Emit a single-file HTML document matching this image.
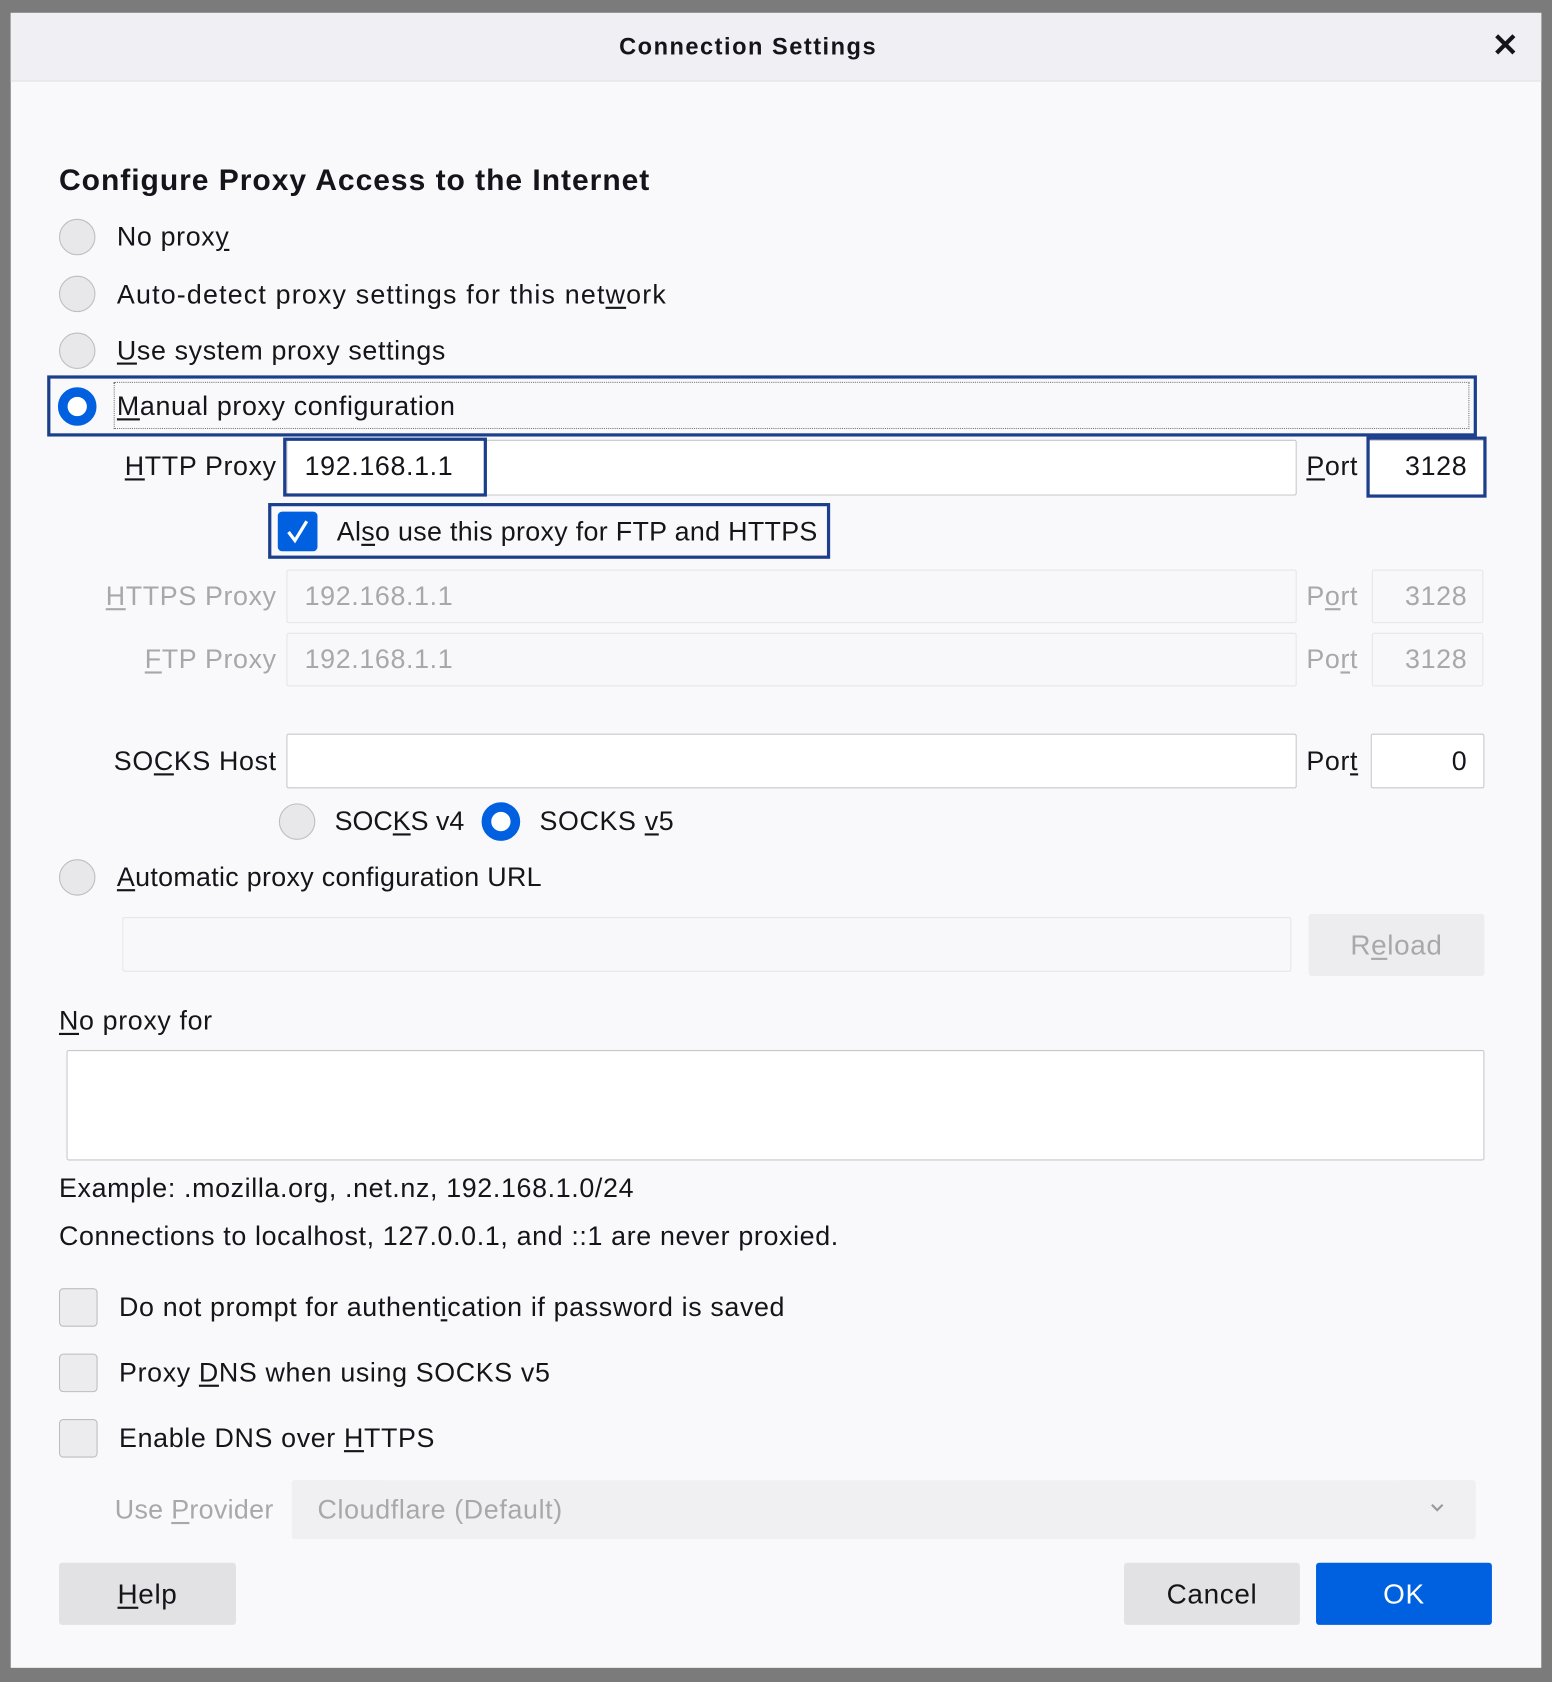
<!DOCTYPE html>
<html><head><meta charset="utf-8"><style>
html,body{margin:0;padding:0;width:1552px;height:1682px;overflow:hidden;background:#7b7b7b;}
#w{position:absolute;left:0;top:0;width:1447px;height:1568px;transform:scale(1.07256);transform-origin:0 0;font-family:"Liberation Sans",sans-serif;color:#15141a;}
.a{position:absolute;white-space:nowrap;}
.t{font-size:25px;line-height:30px;letter-spacing:0.6px;}
.r{width:258px;left:0;text-align:right;}
.dlg{position:absolute;left:10px;top:12px;width:1427px;height:1543px;background:#f9f9fb;}
.tb{position:absolute;left:10px;top:12px;width:1427px;height:63px;background:#f0f0f4;border-bottom:1px solid #e0e0e6;}
.rad{position:absolute;width:34px;height:34px;border-radius:50%;background:#e8e8ea;border:1px solid #bdbdc2;box-sizing:border-box;}
.rsel{position:absolute;width:36px;height:36px;border-radius:50%;background:#fff;border:9px solid #0060df;box-sizing:border-box;}
.cb{position:absolute;width:36px;height:36px;border-radius:4px;background:#ececee;border:1px solid #bdbdc2;box-sizing:border-box;}
.in{position:absolute;background:#fff;border:1px solid #c8c8cc;box-sizing:border-box;border-radius:2px;}
.dis{position:absolute;background:#f8f8fa;border:1px solid #e6e6e8;box-sizing:border-box;border-radius:2px;}
.fb{position:absolute;border:3px solid #1c3f8c;box-sizing:border-box;}
.g{color:#a8a8ac;}
u{text-decoration:underline;text-underline-offset:3px;}
.btn{position:absolute;border-radius:3px;font-size:26px;letter-spacing:0.6px;display:flex;align-items:center;justify-content:center;}
</style></head><body><div id="w">
<div class="dlg"></div>
<div class="tb"></div>
<div class="a" style="left:0;width:1395px;text-align:center;top:29px;font-size:22px;font-weight:bold;line-height:30px;letter-spacing:1.4px">Connection Settings</div>
<div class="a" style="left:1391px;top:26px;font-size:30px;font-weight:bold;line-height:34px">✕</div>

<div class="a" style="left:55px;top:151px;font-size:28px;font-weight:bold;line-height:34px;letter-spacing:0.9px">Configure Proxy Access to the Internet</div>

<div class="rad" style="left:55px;top:204px"></div><div class="a t" style="left:109px;top:206px">No prox<u>y</u></div>
<div class="rad" style="left:55px;top:257px"></div><div class="a t" style="left:109px;top:260px;letter-spacing:1.1px">Auto-detect proxy settings for this net<u>w</u>ork</div>
<div class="rad" style="left:55px;top:310px"></div><div class="a t" style="left:109px;top:312px"><u>U</u>se system proxy settings</div>
<div class="fb" style="left:44px;top:350px;width:1333px;height:57px"></div>
<div class="a" style="left:106px;top:356px;width:1264px;height:44px;border:1px dotted #777;box-sizing:border-box"></div>
<div class="rsel" style="left:54px;top:361px"></div><div class="a t" style="left:109px;top:364px"><u>M</u>anual proxy configuration</div>

<div class="a t r" style="top:420px"><u>H</u>TTP Proxy</div>
<div class="in" style="left:267px;top:410px;width:942px;height:52px"></div>
<div class="fb" style="left:264px;top:408px;width:190px;height:55px"></div>
<div class="a t" style="left:284px;top:420px">192.168.1.1</div>
<div class="a t" style="left:1218px;top:420px"><u>P</u>ort</div>
<div class="in" style="left:1276px;top:410px;width:108px;height:52px"></div>
<div class="fb" style="left:1274px;top:407px;width:112px;height:57px"></div>
<div class="a t" style="left:1276px;width:92px;text-align:right;top:420px">3128</div>

<div class="fb" style="left:250px;top:469px;width:524px;height:52px"></div>
<div class="a" style="left:259px;top:477px;width:37px;height:37px;background:#0060df;border-radius:4px"></div>
<svg class="a" style="left:259px;top:477px" width="37" height="37" viewBox="0 0 37 37"><path d="M10 19 L16 27 L27 9" fill="none" stroke="#fff" stroke-width="3"/></svg>
<div class="a t" style="left:314px;top:481px;letter-spacing:0.3px">Al<u>s</u>o use this proxy for FTP and HTTPS</div>

<div class="a t g r" style="top:541px"><u>H</u>TTPS Proxy</div>
<div class="dis" style="left:267px;top:531px;width:942px;height:50px"></div>
<div class="a t g" style="left:284px;top:541px">192.168.1.1</div>
<div class="a t g" style="left:1218px;top:541px">P<u>o</u>rt</div>
<div class="dis" style="left:1279px;top:531px;width:104px;height:50px"></div>
<div class="a t g" style="left:1279px;width:89px;text-align:right;top:541px">3128</div>

<div class="a t g r" style="top:600px"><u>F</u>TP Proxy</div>
<div class="dis" style="left:267px;top:590px;width:942px;height:50px"></div>
<div class="a t g" style="left:284px;top:600px">192.168.1.1</div>
<div class="a t g" style="left:1218px;top:600px">Po<u>r</u>t</div>
<div class="dis" style="left:1279px;top:590px;width:104px;height:50px"></div>
<div class="a t g" style="left:1279px;width:89px;text-align:right;top:600px">3128</div>

<div class="a t r" style="top:695px">SO<u>C</u>KS Host</div>
<div class="in" style="left:267px;top:684px;width:942px;height:51px"></div>
<div class="a t" style="left:1218px;top:695px">Por<u>t</u></div>
<div class="in" style="left:1278px;top:684px;width:106px;height:51px"></div>
<div class="a t" style="left:1278px;width:90px;text-align:right;top:695px">0</div>

<div class="rad" style="left:260px;top:749px"></div><div class="a t" style="left:312px;top:751px;letter-spacing:0">SOC<u>K</u>S v4</div>
<div class="rsel" style="left:449px;top:748px"></div><div class="a t" style="left:503px;top:751px">SOCKS <u>v</u>5</div>

<div class="rad" style="left:55px;top:801px"></div><div class="a t" style="left:109px;top:803px;letter-spacing:0.3px"><u>A</u>utomatic proxy configuration URL</div>
<div class="dis" style="left:114px;top:855px;width:1090px;height:51px"></div>
<div class="btn g" style="left:1220px;top:852px;width:164px;height:58px;background:#ededef"><span>R<u>e</u>load</span></div>

<div class="a t" style="left:55px;top:937px"><u>N</u>o proxy for</div>
<div class="in" style="left:62px;top:979px;width:1322px;height:103px"></div>
<div class="a t" style="left:55px;top:1093px">Example: .mozilla.org, .net.nz, 192.168.1.0/24</div>
<div class="a t" style="left:55px;top:1138px">Connections to localhost, 127.0.0.1, and ::1 are never proxied.</div>

<div class="cb" style="left:55px;top:1201px"></div><div class="a t" style="left:111px;top:1204px">Do not prompt for authent<u>i</u>cation if password is saved</div>
<div class="cb" style="left:55px;top:1262px"></div><div class="a t" style="left:111px;top:1265px">Proxy <u>D</u>NS when using SOCKS v5</div>
<div class="cb" style="left:55px;top:1323px"></div><div class="a t" style="left:111px;top:1326px">Enable DNS over <u>H</u>TTPS</div>

<div class="a t g" style="left:107px;top:1393px;letter-spacing:0.3px">Use <u>P</u>rovider</div>
<div class="a" style="left:272px;top:1380px;width:1104px;height:55px;background:#f0f0f2;border-radius:3px"></div>
<div class="a t g" style="left:296px;top:1393px">Cloudflare (Default)</div>
<svg class="a" style="left:1332px;top:1400px" width="16" height="12" viewBox="0 0 16 12"><path d="M3 3 L8 8 L13 3" fill="none" stroke="#999" stroke-width="2"/></svg>

<div class="btn" style="left:55px;top:1457px;width:165px;height:58px;background:#e2e2e4"><span><u>H</u>elp</span></div>
<div class="btn" style="left:1048px;top:1457px;width:164px;height:58px;background:#e2e2e4">Cancel</div>
<div class="btn" style="left:1227px;top:1457px;width:164px;height:58px;background:#0061e0;color:#fff">OK</div>
</div></body></html>
